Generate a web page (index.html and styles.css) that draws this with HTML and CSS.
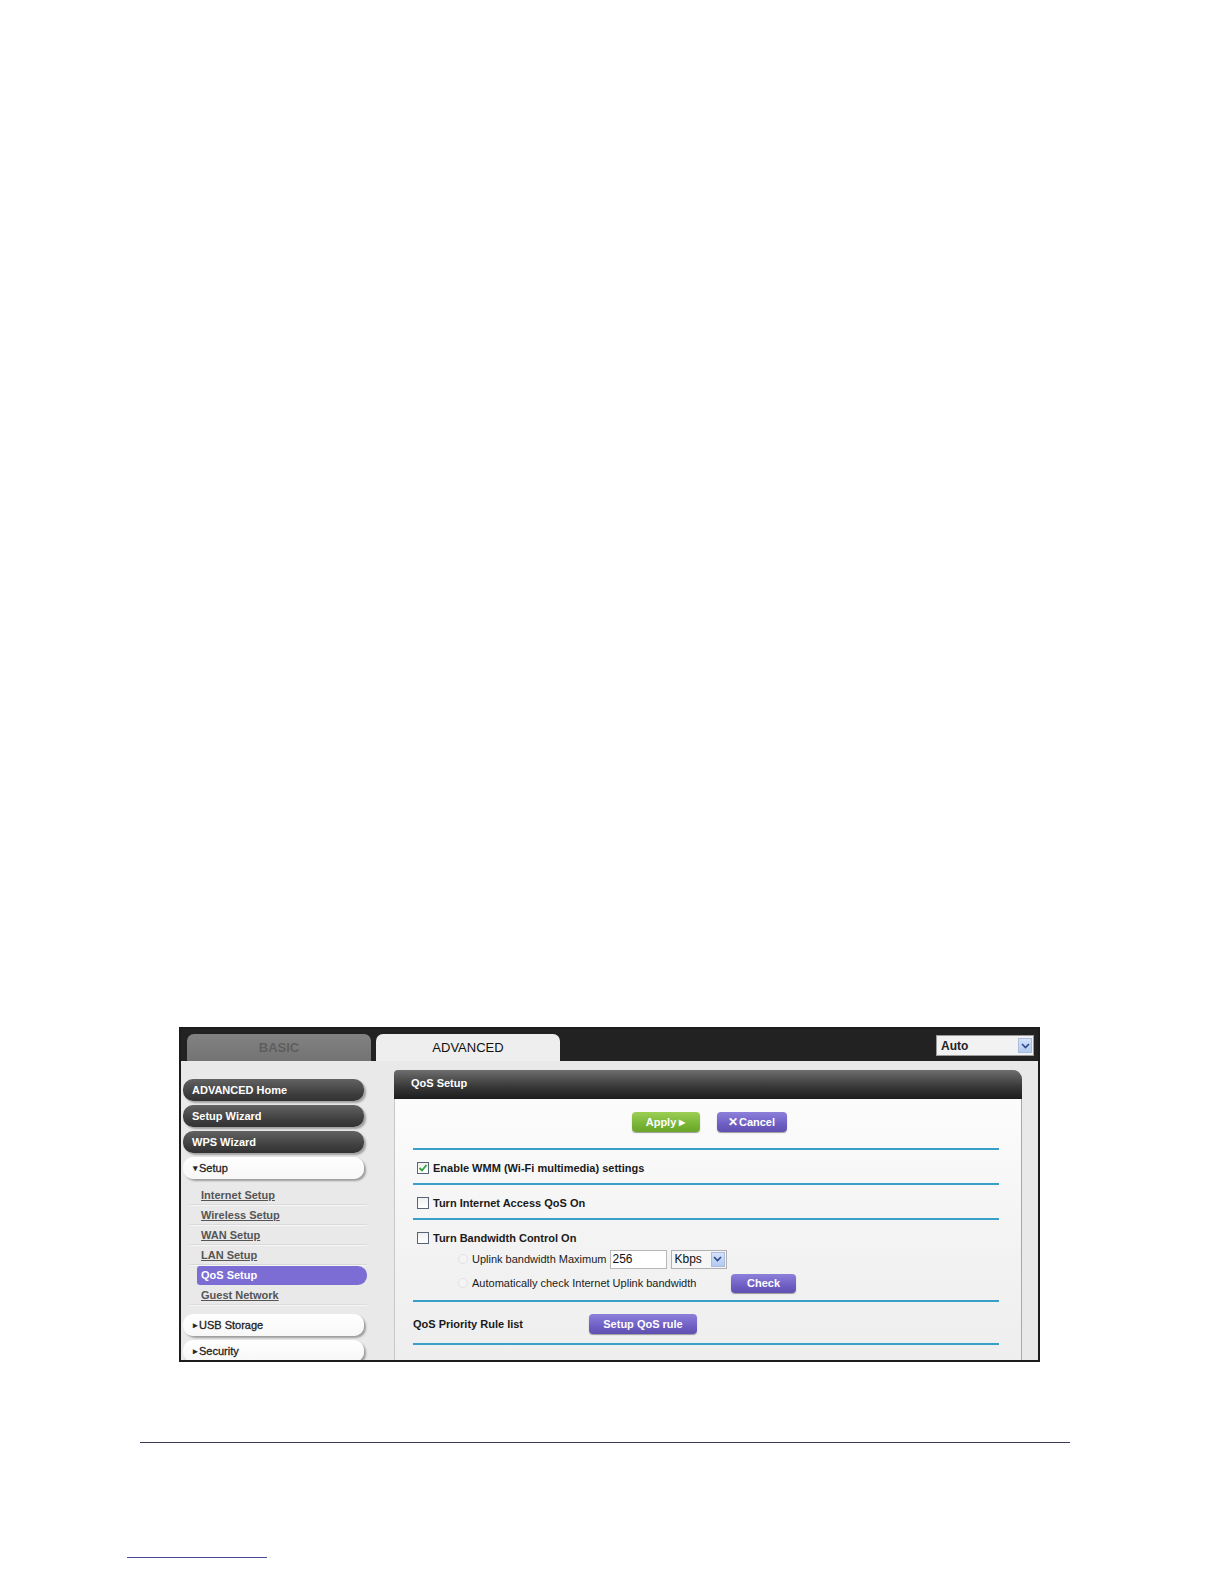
FILE: index.html
```html
<!DOCTYPE html>
<html>
<head>
<meta charset="utf-8">
<link rel="stylesheet" href="styles.css">
</head>
<body>
<div class="page">
  <div class="frame">
    <div class="topbar">
      <div class="tab tab-basic">BASIC</div>
      <div class="tab tab-adv">ADVANCED</div>
      <div class="spacer"></div>
      <div class="lang">
        <span class="lang-text">Auto</span>
        <span class="lang-btn"><svg width="9" height="6" viewBox="0 0 9 6"><path d="M1 1 L4.5 4.5 L8 1" fill="none" stroke="#2a4a8a" stroke-width="1.6"/></svg></span>
      </div>
    </div>
    <div class="body">
      <div class="sidebar">
        <div class="pill dark">ADVANCED Home</div>
        <div class="pill dark">Setup Wizard</div>
        <div class="pill dark">WPS Wizard</div>
        <div class="pill light"><span class="tri">&#9662;</span>Setup</div>
        <div class="sublist">
          <div class="sub"><span>Internet Setup</span></div>
          <div class="sub"><span>Wireless Setup</span></div>
          <div class="sub"><span>WAN Setup</span></div>
          <div class="sub"><span>LAN Setup</span></div>
          <div class="sub active"><span>QoS Setup</span></div>
          <div class="sub last"><span>Guest Network</span></div>
        </div>
        <div class="pill light"><span class="tri">&#9656;</span>USB Storage</div>
        <div class="pill light"><span class="tri">&#9656;</span>Security</div>
      </div>
      <div class="main">
        <div class="panel-head">QoS Setup</div>
        <div class="panel-body">
          <div class="btnrow">
            <div class="btn green">Apply <span class="play">&#9654;</span></div>
            <div class="btn purple"><span class="x">&#10005;</span>Cancel</div>
          </div>
          <div class="sec sec1">
            <span class="cb checked"><svg width="10" height="10" viewBox="0 0 10 10"><path d="M1.5 5 L4 7.5 L8.5 2" fill="none" stroke="#2fa33a" stroke-width="1.8"/></svg></span>
            <span class="lbl">Enable WMM (Wi-Fi multimedia) settings</span>
          </div>
          <div class="sec sec1">
            <span class="cb"></span>
            <span class="lbl">Turn Internet Access QoS On</span>
          </div>
          <div class="sec sec3">
            <div class="row r-title">
              <span class="cb"></span>
              <span class="lbl">Turn Bandwidth Control On</span>
            </div>
            <div class="row r-up">
              <span class="radio"></span>
              <span class="txt">Uplink bandwidth Maximum</span>
              <span class="input">256</span>
              <span class="sel"><span class="sel-text">Kbps</span><span class="sel-btn"><svg width="9" height="6" viewBox="0 0 9 6"><path d="M1 1 L4.5 4.5 L8 1" fill="none" stroke="#2a4a8a" stroke-width="1.6"/></svg></span></span>
            </div>
            <div class="row r-auto">
              <span class="radio"></span>
              <span class="txt auto-txt">Automatically check Internet Uplink bandwidth</span>
              <div class="btn purple check">Check</div>
            </div>
          </div>
          <div class="sec sec4">
            <span class="lbl rule-lbl">QoS Priority Rule list</span>
            <div class="btn purple rule">Setup QoS rule</div>
          </div>
          <div class="sec sec-end"></div>
        </div>
      </div>
    </div>
  </div>
  <div class="rule-line"></div>
  <div class="foot-line"></div>
</div>
</body>
</html>
```

FILE: styles.css
```css
html {
  margin: 0;
  padding: 0;
  width: 1224px;
  height: 1584px;
  overflow: hidden;
  background: #ffffff;
}
body {
  margin: 0;
  padding: 0;
  font-family: "Liberation Sans", Arial, sans-serif;
  width: 1224px;
  height: 1584px;
  overflow: hidden;
  background: #ffffff;
}
.page {
  padding-top: 1027px;
  height: 1584px;
  box-sizing: border-box;
  overflow: hidden;
}
.frame {
  margin-left: 179px;
  width: 857px;
  height: 331px;
  border: 2px solid #1c1c1c;
  background: #e9e9e9;
  overflow: hidden;
}
.topbar {
  height: 32px;
  background: #222222;
  display: flex;
  align-items: flex-end;
  padding-left: 6px;
  padding-right: 4px;
  box-sizing: border-box;
}
.tab {
  width: 184px;
  height: 27px;
  border-radius: 7px 7px 0 0;
  display: flex;
  align-items: center;
  justify-content: center;
  font-size: 13px;
  margin-right: 5px;
}
.tab-basic {
  background: linear-gradient(#828282, #737373);
  color: #5e5e5e;
  font-weight: bold;
}
.tab-adv {
  background: #eeeeee;
  color: #111111;
}
.spacer { flex: 1; }
.lang {
  align-self: center;
  margin-top: 1px;
  width: 96px;
  height: 19px;
  border: 1px solid #9a9a9a;
  background: #f2f2f2;
  display: flex;
  align-items: center;
  justify-content: space-between;
}
.lang-text {
  font-size: 12px;
  font-weight: bold;
  color: #222;
  padding-left: 4px;
}
.lang-btn, .sel-btn {
  width: 14px;
  height: 15px;
  margin-right: 1px;
  background: linear-gradient(#d4e2f8, #b3c9ee);
  border: 1px solid #a9bde0;
  box-sizing: border-box;
  display: flex;
  align-items: center;
  justify-content: center;
}
.body {
  display: flex;
  height: 299px;
}
.sidebar {
  width: 184px;
  margin-left: 2px;
  padding-top: 18px;
  flex-shrink: 0;
}
.pill {
  width: 181px;
  height: 22px;
  border-radius: 10px;
  box-sizing: border-box;
  display: flex;
  align-items: center;
  font-size: 11px;
  font-weight: bold;
  margin-bottom: 4px;
}
.pill.dark {
  background: linear-gradient(#626262, #3d3d3d 70%, #333333);
  color: #ffffff;
  padding-left: 9px;
  box-shadow: 2px 2px 2px #a0a0a0;
}
.pill.light {
  background: linear-gradient(#ffffff, #f7f7f7);
  color: #222222;
  padding-left: 10px;
  box-shadow: 2px 2px 2px #9e9e9e;
  font-weight: normal;
  -webkit-text-stroke: 0.3px #222;
}
.tri {
  font-size: 9px;
  margin-right: 1px;
}
.sublist {
  padding-top: 3px;
  padding-bottom: 8px;
  margin-left: 6px;
}
.sub {
  height: 18px;
  display: flex;
  align-items: center;
  border-bottom: 1px solid #d9d9d9;
  box-shadow: 0 1px 0 #f6f6f6;
  margin-bottom: 1px;
  width: 178px;
  font-size: 11px;
  font-weight: bold;
  color: #555555;
}
.sub span {
  text-decoration: underline;
  padding-left: 12px;
}
.sub.last {
  border-bottom: 1px solid #dcdcdc;
}
.sub.active {
  background: #7c6dd4;
  border-bottom-color: transparent;
  box-shadow: none;
  color: #ffffff;
  width: 170px;
  margin-left: 8px;
  border-radius: 3px 9px 9px 3px;
}
.sub.active span {
  text-decoration: none;
  padding-left: 4px;
}
.main {
  margin-left: 27px;
  padding-top: 9px;
  width: 628px;
}
.panel-head {
  height: 29px;
  background: linear-gradient(#6e6e6e, #3a3a3a 55%, #1c1c1c);
  border-radius: 4px 9px 0 0;
  color: #ffffff;
  font-size: 11px;
  font-weight: bold;
  padding-left: 17px;
  box-sizing: border-box;
  padding-top: 7px;
}
.panel-body {
  height: 270px;
  background: linear-gradient(#fcfcfc, #f2f2f2 60%, #eeeeee);
  border-left: 1px solid #c8c8c8;
  border-right: 1px solid #a8a8a8;
  padding-left: 18px;
  padding-right: 22px;
  padding-top: 13px;
  box-sizing: border-box;
}
.btnrow {
  display: flex;
  justify-content: center;
  gap: 17px;
  height: 20px;
  padding-left: 6px;
  margin-bottom: 16px;
}
.btn {
  height: 20px;
  border-radius: 4px;
  color: #ffffff;
  font-size: 11px;
  font-weight: bold;
  display: flex;
  align-items: center;
  justify-content: center;
  box-sizing: border-box;
  box-shadow: 0 1px 1px #9a9a9a;
}
.btn.green {
  width: 68px;
  background: linear-gradient(#9ccf55, #79b536 60%, #6aa52a);
}
.btn.purple {
  background: linear-gradient(#8d80da, #6f5fc4 60%, #5f4fb0);
}
.btnrow .btn.purple {
  width: 70px;
}
.play {
  font-size: 8px;
  margin-left: 3px;
}
.x {
  font-size: 12px;
  margin-right: 1px;
}
.sec {
  border-top: 2px solid #37a0c9;
  box-sizing: border-box;
}
.sec1 {
  height: 35px;
  display: flex;
  align-items: center;
  padding-top: 2px;
  padding-left: 4px;
}
.cb {
  width: 12px;
  height: 12px;
  border: 1px solid #556476;
  box-sizing: border-box;
  background: linear-gradient(#f0f0f0, #ffffff);
  display: inline-flex;
  align-items: center;
  justify-content: center;
  margin-right: 4px;
  flex-shrink: 0;
}
.lbl {
  font-size: 11px;
  font-weight: bold;
  color: #1a1a1a;
}
.sec3 {
  height: 82px;
  padding-top: 11px;
}
.row {
  display: flex;
  align-items: center;
}
.r-title {
  height: 14px;
  padding-left: 4px;
}
.r-up {
  height: 20px;
  margin-top: 4px;
  padding-left: 45px;
}
.r-auto {
  height: 20px;
  margin-top: 4px;
  padding-left: 45px;
}
.radio {
  width: 10px;
  height: 10px;
  border-radius: 50%;
  border: 1px solid #e2e2e2;
  background: #f4f4f4;
  box-sizing: border-box;
  margin-right: 4px;
  flex-shrink: 0;
}
.txt {
  font-size: 11px;
  color: #1a1a1a;
}
.input {
  width: 57px;
  height: 19px;
  border: 1px solid #b8b8b8;
  background: #ffffff;
  box-sizing: border-box;
  font-size: 12px;
  color: #111;
  padding-left: 2px;
  display: flex;
  align-items: center;
  margin-left: 3px;
}
.sel {
  width: 56px;
  height: 19px;
  border: 1px solid #b0b0b0;
  background: #f6f6f6;
  box-sizing: border-box;
  margin-left: 4px;
  display: flex;
  align-items: center;
  justify-content: space-between;
}
.sel-text {
  font-size: 12px;
  color: #111;
  padding-left: 3px;
}
.auto-txt {
  width: 259px;
}
.check {
  width: 65px;
  height: 19px;
}
.sec4 {
  height: 43px;
  display: flex;
  align-items: center;
  padding-top: 2px;
}
.rule-lbl {
  width: 176px;
}
.rule {
  width: 108px;
  height: 20px;
}
.sec-end {
  height: 0;
}
.rule-line {
  margin-top: 80px;
  margin-left: 140px;
  width: 930px;
  height: 1px;
  background: #3e3858;
}
.foot-line {
  margin-top: 114px;
  margin-left: 127px;
  width: 140px;
  height: 1px;
  background: #4a4a9a;
}
```
